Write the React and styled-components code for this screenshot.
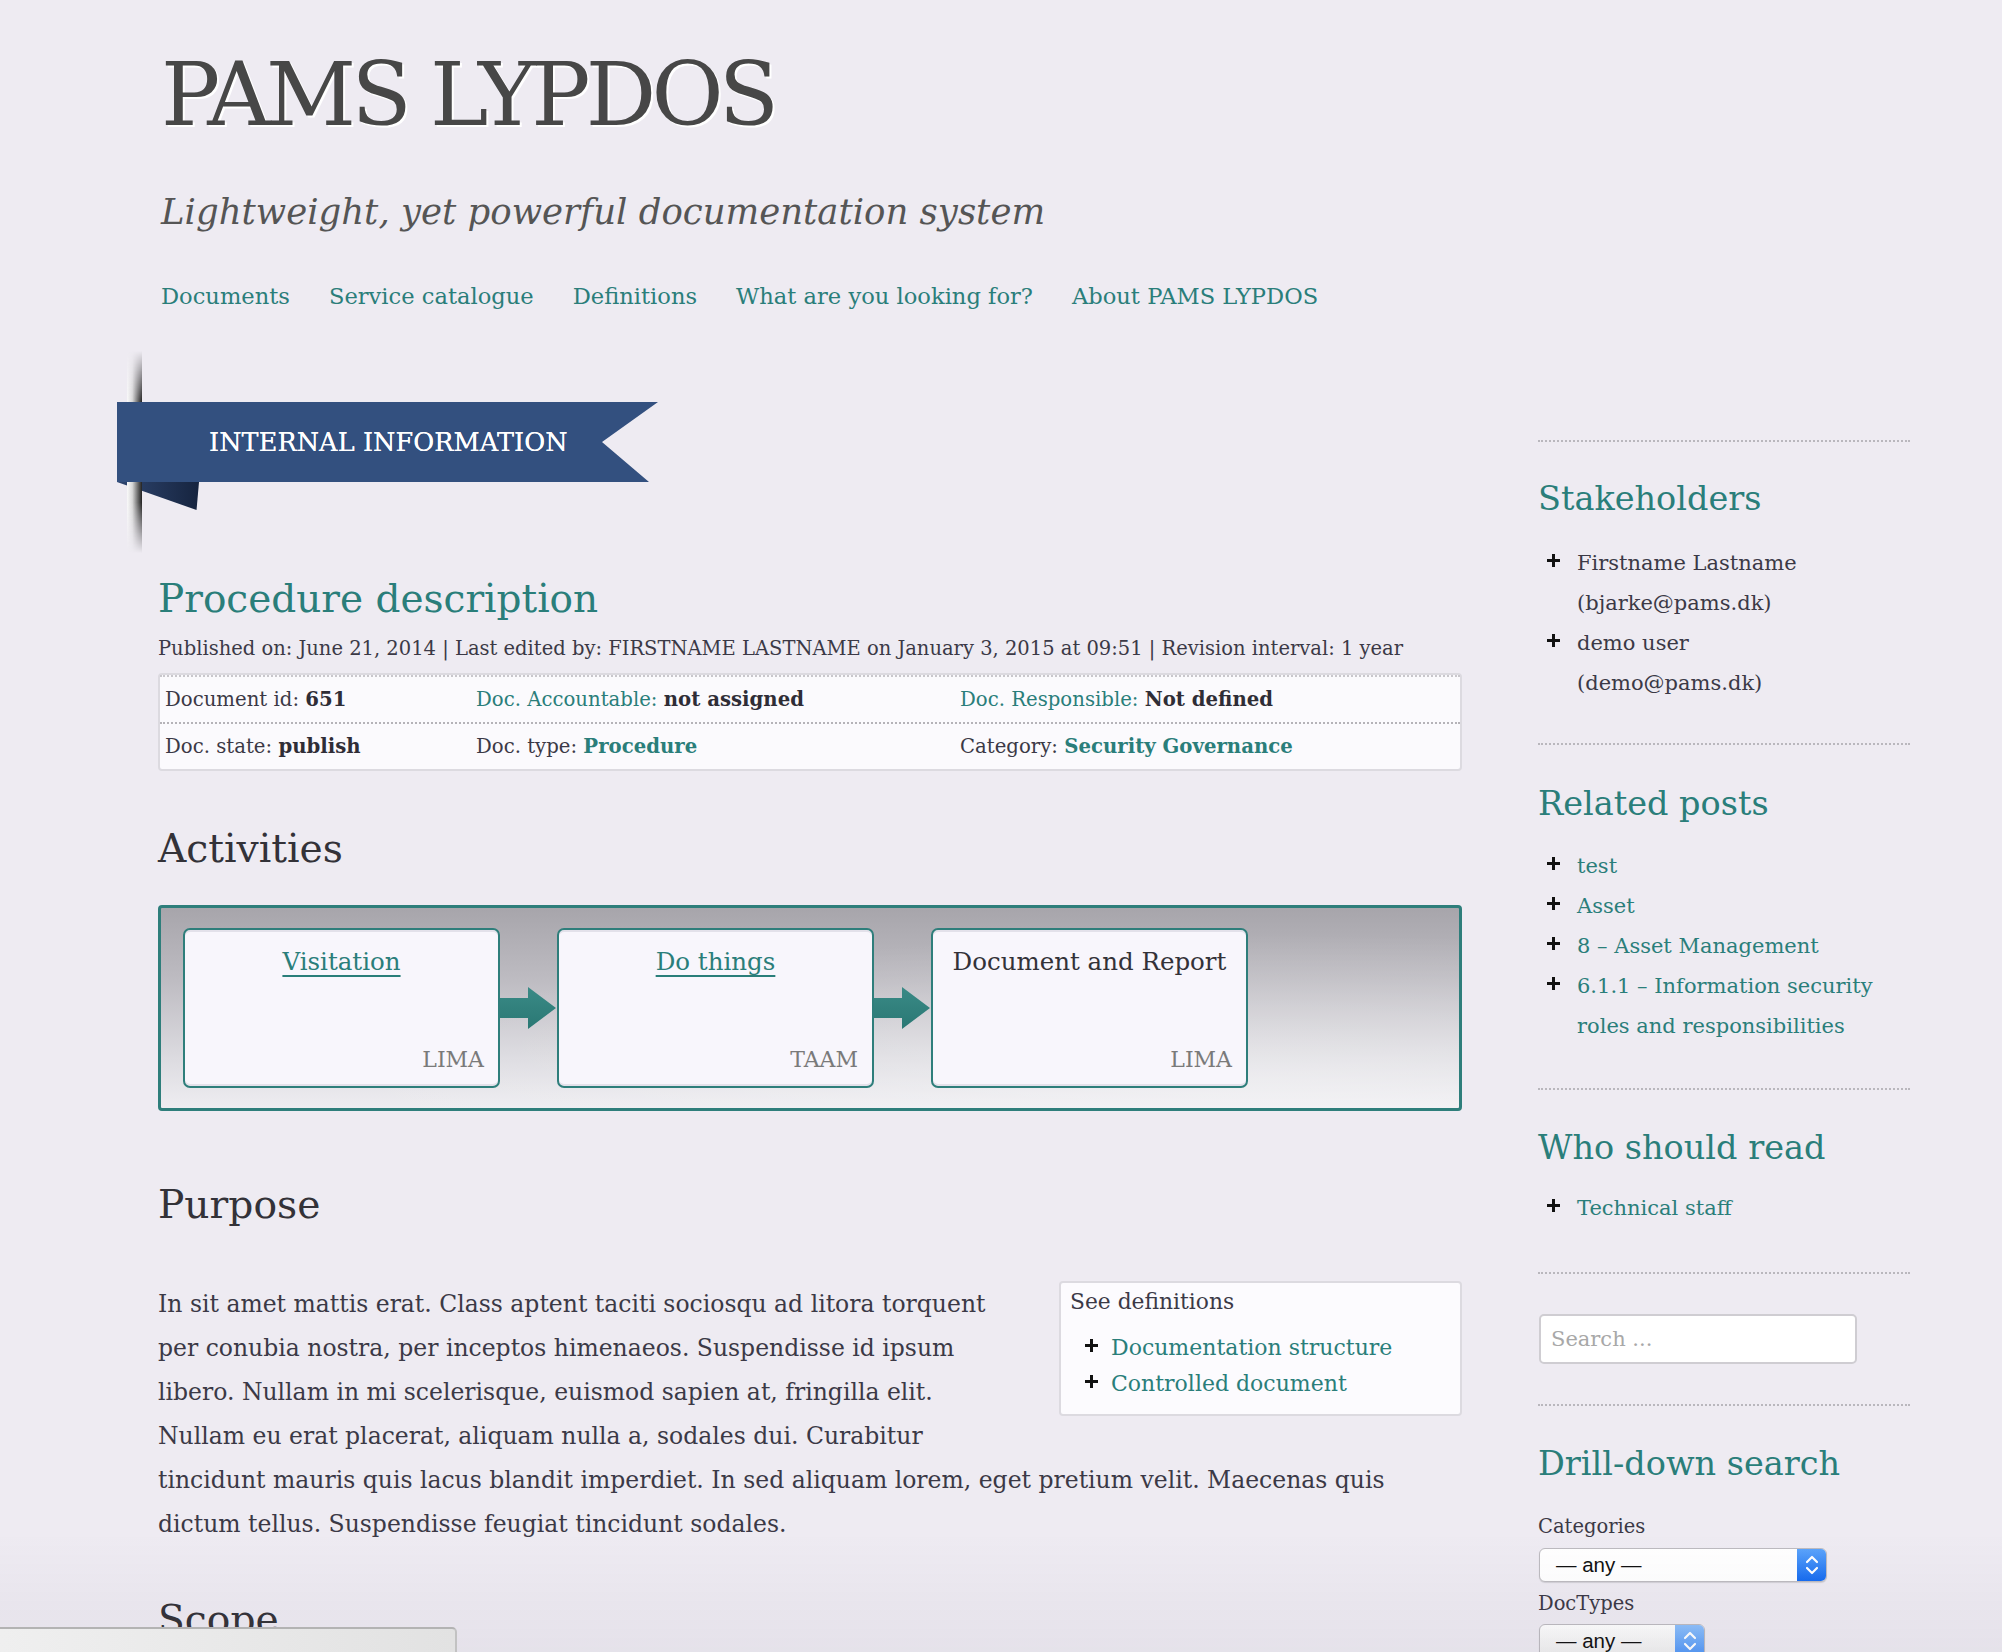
import React from "react";
import styled, { createGlobalStyle } from "styled-components";

const TEAL = "#2a7e7a";
const TEXT = "#3b3946";
const SERIF = `"DejaVu Serif", "Liberation Serif", serif`;

const GlobalStyle = createGlobalStyle`
  html, body { margin: 0; padding: 0; overflow: hidden; }
  body { background: #eeebf2; font-family: ${SERIF}; color: ${TEXT}; }
  a { color: ${TEAL}; text-decoration: none; }
  * { box-sizing: border-box; }
`;

const Page = styled.div`
  padding-left: 158px;
  min-height: 1652px;
`;

const Header = styled.header`
  padding: 45px 0 0 3px;
`;

const SiteTitle = styled.h1`
  margin: 0;
  font-family: ${SERIF};
  font-weight: normal;
  font-size: 88px;
  line-height: 100px;
  letter-spacing: -4.8px;
  color: #474747;
  text-shadow: 2px 2px 0 #fff;
`;

const Tagline = styled.p`
  margin: 42px 0 0;
  font-style: italic;
  font-size: 35.5px;
  line-height: 50px;
  color: #555;
`;

const Nav = styled.nav`
  margin-top: 39px;
  display: flex;
  gap: 39px;
  font-size: 22.6px;
  line-height: 40px;
`;

const Columns = styled.div`
  margin-top: 24px;
  display: grid;
  grid-template-columns: 1304px 372px;
  column-gap: 76px;
  align-items: start;
`;

const Main = styled.main``;

const RibbonWrap = styled.div`
  position: relative;
  margin: 62px 0 0 -41px;
  height: 80px;
`;

const Pole = styled.div`
  position: absolute;
  left: 10px;
  top: -51px;
  width: 15px;
  height: 202px;
  background: linear-gradient(to right, #fafafa 0%, #d8d8d8 35%, #555 80%, #222 100%);
  -webkit-mask-image: linear-gradient(to bottom, transparent 0%, #000 25%, #000 75%, transparent 100%);
  mask-image: linear-gradient(to bottom, transparent 0%, #000 25%, #000 75%, transparent 100%);
  z-index: 1;
`;

const Fold = styled.div`
  position: absolute;
  left: 0;
  top: 80px;
  width: 82px;
  height: 28px;
  background: linear-gradient(to right, #2f4670, #16243f);
  clip-path: polygon(0 0, 100% 0, 97% 100%);
  z-index: 0;
`;

const Ribbon = styled.div`
  position: relative;
  z-index: 2;
  width: 541px;
  height: 80px;
  background: #33507f;
  clip-path: polygon(0 0, 100% 0, calc(100% - 56px) 50%, calc(100% - 9px) 100%, 0 100%);
  display: flex;
  align-items: center;
  padding-left: 92px;
  color: #fff;
  font-size: 25.5px;
  letter-spacing: 0.1px;
  text-shadow: 0 0 0.5px #fff;
`;

const PageTitle = styled.h2`
  margin: 92px 0 0;
  font-weight: normal;
  font-size: 39px;
  line-height: 50px;
  color: ${TEAL};
`;

const Meta = styled.div`
  margin-top: 10px;
  font-size: 19.5px;
  line-height: 30px;
  color: ${TEXT};
  white-space: nowrap;
`;

const InfoTable = styled.div`
  margin-top: 9px;
  background: #fbfafd;
  border: 2px solid #dcdae0;
  border-radius: 4px;
`;

const InfoRow = styled.div`
  display: grid;
  grid-template-columns: 311px 484px 1fr;
  padding-left: 5px;
  height: 47px;
  align-items: center;
  border-top: 2px dotted ${(p) => (p.$first ? "#c9c7cc" : "#b5b3b8")};
  font-size: 19.7px;
`;

const Label = styled.span`
  color: ${(p) => (p.$teal ? TEAL : TEXT)};
`;

const Value = styled.b`
  color: ${(p) => (p.$teal ? TEAL : "#2f2d36")};
`;

const SectionTitle = styled.h3`
  margin: ${(p) => p.$mt}px 0 0;
  font-weight: normal;
  font-size: 39.2px;
  line-height: 50px;
  color: #333238;
`;

const Flow = styled.div`
  margin-top: 31px;
  height: 206px;
  border: 3px solid #2e7e7b;
  border-radius: 4px;
  background:
    radial-gradient(ellipse at 85% 85%, rgba(255,255,255,0.35), rgba(255,255,255,0) 60%),
    linear-gradient(to bottom, #a7a5ab 0%, #bdbbc1 35%, #dcdbe0 75%, #eeedf1 100%);
  display: flex;
  align-items: center;
  padding-left: 22px;
`;

const Step = styled.div`
  position: relative;
  width: 317px;
  height: 160px;
  border: 2px solid #2e7e7b;
  border-radius: 7px;
  background: #f8f6fc;
  box-shadow: inset 0 2px 0 #e3e1ea, inset 0 -2px 0 #e3e1ea;
  display: flex;
  flex-direction: column;
  align-items: center;
  padding: 12px 14px 10px;
`;

const StepTitle = styled.a`
  font-size: 24.5px;
  line-height: 40px;
  color: ${(p) => (p.$link ? TEAL : "#333238")};
  text-decoration: ${(p) => (p.$link ? "underline" : "none")};
  text-underline-offset: 5px;
  text-decoration-thickness: 2px;
`;

const StepOwner = styled.span`
  margin-top: auto;
  align-self: flex-end;
  font-size: 22px;
  line-height: 32px;
  color: #7a7a7a;
`;

const Arrow = () => (
  <svg width="57" height="44" viewBox="0 0 57 44">
    <defs>
      <linearGradient id="shaft" x1="0" y1="0" x2="0" y2="1">
        <stop offset="0" stopColor="#3a8a86" />
        <stop offset="1" stopColor="#2a7874" />
      </linearGradient>
    </defs>
    <path d="M0 12 H28 V1 L56 22 L28 43 V32 H0 Z" fill="url(#shaft)" />
  </svg>
);

const Content = styled.div`
  margin-top: 52px;
  font-size: 23.5px;
  line-height: 44px;
  color: ${TEXT};
  &::after { content: ""; display: block; clear: both; }
`;

const DefBox = styled.aside`
  float: right;
  width: 403px;
  height: 135px;
  margin: -1px 0 0 40px;
  background: #fcfbfe;
  border: 2px solid #dcdae0;
  border-radius: 4px;
  padding: 3px 10px 0 9px;
`;

const DefTitle = styled.div`
  font-size: 21.8px;
  line-height: 32px;
  margin-bottom: 12px;
`;

const BulletList = styled.ul`
  list-style: none;
  margin: 0;
  padding: 0;
  max-width: ${(p) => p.$max || "none"};
`;

const BulletItem = styled.li`
  display: grid;
  grid-template-columns: ${(p) => p.$indent}px 1fr;
  font-size: ${(p) => p.$size}px;
  line-height: ${(p) => p.$lh}px;
  color: ${(p) => (p.$teal ? TEAL : TEXT)};
`;

const PlusCell = styled.span`
  position: relative;
  height: ${(p) => p.$lh}px;
  &::before, &::after {
    content: "";
    position: absolute;
    background: #111;
  }
  &::before {
    left: ${(p) => p.$x}px;
    top: 50%;
    width: 13px;
    height: 3px;
    margin-top: -4px;
  }
  &::after {
    left: ${(p) => p.$x + 5}px;
    top: 50%;
    width: 3px;
    height: 13px;
    margin-top: -9px;
  }
`;

const Paragraph = styled.p`
  margin: 0;
`;

const Sidebar = styled.aside`
  padding-top: 100px;
`;

const Widget = styled.section`
  border-top: 2px dotted #b9b7bd;
  padding: ${(p) => p.$pt ?? 36}px 0 ${(p) => p.$pb ?? 40}px;
`;

const WidgetTitle = styled.h4`
  margin: 0 0 ${(p) => p.$mb ?? 20}px;
  font-weight: normal;
  font-size: 33.5px;
  line-height: 44px;
  color: ${TEAL};
`;

const SearchInput = styled.input`
  display: block;
  width: 318px;
  height: 50px;
  margin-left: 1px;
  border: 2px solid #cfcdd2;
  border-radius: 5px;
  background: #fff;
  padding: 0 10px;
  font-family: ${SERIF};
  font-size: 21px;
  color: ${TEXT};
  &::placeholder { color: #a8a8a8; }
`;

const FieldLabel = styled.div`
  margin-top: ${(p) => p.$mt || 0}px;
  font-size: 19.5px;
  line-height: 30px;
  color: ${TEXT};
`;

const Select = styled.div`
  display: flex;
  width: ${(p) => p.$w}px;
  height: 34px;
  margin: ${(p) => p.$mt}px 0 0 1px;
  border: 1px solid #bdbbc0;
  border-radius: 6px;
  overflow: hidden;
  background: ${(p) => (p.$dim ? "linear-gradient(#fdfdfd, #eeeeee)" : "#fff")};
  box-shadow: 0 1px 1px rgba(0,0,0,0.12);
`;

const SelectText = styled.span`
  flex: 1;
  font-family: "Liberation Sans", Arial, sans-serif;
  font-size: 20.5px;
  line-height: 32px;
  padding-left: 16px;
  color: #111;
`;

const Stepper = styled.span`
  width: 29px;
  display: flex;
  align-items: center;
  justify-content: center;
  background: ${(p) => (p.$dim ? "linear-gradient(#8ec0fb, #4d94f6)" : "linear-gradient(#5ba4fb, #166cf0)")};
`;

const Chevrons = () => (
  <svg width="14" height="24" viewBox="0 0 14 24">
    <path d="M2 9 L7 4 L12 9 M2 15 L7 20 L12 15" fill="none" stroke="#fff" strokeWidth="2.2" strokeLinecap="round" strokeLinejoin="round" />
  </svg>
);

const BottomShade = styled.div`
  position: fixed;
  left: 0;
  right: 0;
  bottom: 0;
  height: 120px;
  background: linear-gradient(to bottom, rgba(80,70,100,0) 0%, rgba(80,70,100,0.05) 100%);
  pointer-events: none;
`;

const StatusBubble = styled.div`
  position: fixed;
  left: 0;
  bottom: 0;
  width: 457px;
  height: 25px;
  border-top: 2px solid #b3b3b3;
  border-right: 2px solid #c2c2c2;
  border-top-right-radius: 5px;
  background: linear-gradient(to right, #efefef, #e2e2e2);
  z-index: 10;
`;

function Bullets({ items, teal, indent = 39, x = 9, size = 21, lh = 40, max }) {
  return (
    <BulletList $max={max}>
      {items.map((t) => (
        <BulletItem key={t} $teal={teal} $indent={indent} $size={size} $lh={lh}>
          <PlusCell $lh={lh} $x={x} />
          <span>{teal ? <a href="#">{t}</a> : t}</span>
        </BulletItem>
      ))}
    </BulletList>
  );
}

export default function App() {
  return (
    <>
      <GlobalStyle />
      <Page>
        <Header>
          <SiteTitle>PAMS LYPDOS</SiteTitle>
          <Tagline>Lightweight, yet powerful documentation system</Tagline>
          <Nav>
            <a href="#">Documents</a>
            <a href="#">Service catalogue</a>
            <a href="#">Definitions</a>
            <a href="#">What are you looking for?</a>
            <a href="#">About PAMS LYPDOS</a>
          </Nav>
        </Header>

        <Columns>
          <Main>
            <RibbonWrap>
              <Pole />
              <Fold />
              <Ribbon>INTERNAL INFORMATION</Ribbon>
            </RibbonWrap>

            <PageTitle>Procedure description</PageTitle>
            <Meta>
              Published on: June 21, 2014 | Last edited by: FIRSTNAME LASTNAME on January 3, 2015 at 09:51 | Revision interval: 1 year
            </Meta>

            <InfoTable>
              <InfoRow $first>
                <span><Label>Document id: </Label><Value>651</Value></span>
                <span><Label $teal>Doc. Accountable: </Label><Value>not assigned</Value></span>
                <span><Label $teal>Doc. Responsible: </Label><Value>Not defined</Value></span>
              </InfoRow>
              <InfoRow>
                <span><Label>Doc. state: </Label><Value>publish</Value></span>
                <span><Label>Doc. type: </Label><Value $teal>Procedure</Value></span>
                <span><Label>Category: </Label><Value $teal>Security Governance</Value></span>
              </InfoRow>
            </InfoTable>

            <SectionTitle $mt={53}>Activities</SectionTitle>
            <Flow>
              <Step>
                <StepTitle href="#" $link>Visitation</StepTitle>
                <StepOwner>LIMA</StepOwner>
              </Step>
              <Arrow />
              <Step>
                <StepTitle href="#" $link>Do things</StepTitle>
                <StepOwner>TAAM</StepOwner>
              </Step>
              <Arrow />
              <Step>
                <StepTitle as="span">Document and Report</StepTitle>
                <StepOwner>LIMA</StepOwner>
              </Step>
            </Flow>

            <SectionTitle $mt={69}>Purpose</SectionTitle>
            <Content>
              <DefBox>
                <DefTitle>See definitions</DefTitle>
                <Bullets items={["Documentation structure", "Controlled document"]} teal indent={41} x={15} size={22} lh={36} />
              </DefBox>
              <Paragraph>
                In sit amet mattis erat. Class aptent taciti sociosqu ad litora torquent per conubia nostra, per inceptos himenaeos. Suspendisse id ipsum libero. Nullam in mi scelerisque, euismod sapien at, fringilla elit. Nullam eu erat placerat, aliquam nulla a, sodales dui. Curabitur tincidunt mauris quis lacus blandit imperdiet. In sed aliquam lorem, eget pretium velit. Maecenas quis dictum tellus. Suspendisse feugiat tincidunt sodales.
              </Paragraph>
            </Content>

            <SectionTitle $mt={49}>Scope</SectionTitle>
            <Content>
              <Paragraph>
                Curabitur tincidunt mauris quis lacus blandit imperdiet. In sed aliquam lorem, eget pretium velit.
              </Paragraph>
            </Content>
          </Main>

          <Sidebar>
            <Widget $pt={35} $pb={40}>
              <WidgetTitle $mb={22}>Stakeholders</WidgetTitle>
              <Bullets max="339px" items={["Firstname Lastname (bjarke@pams.dk)", "demo user (demo@pams.dk)"]} />
            </Widget>
            <Widget $pt={37} $pb={42}>
              <WidgetTitle>Related posts</WidgetTitle>
              <Bullets max="339px" teal items={["test", "Asset", "8 – Asset Management", "6.1.1 – Information security roles and responsibilities"]} />
            </Widget>
            <Widget $pt={36} $pb={44}>
              <WidgetTitle $mb={18}>Who should read</WidgetTitle>
              <Bullets max="339px" teal items={["Technical staff"]} />
            </Widget>
            <Widget $pt={40} $pb={40}>
              <SearchInput placeholder="Search ..." />
            </Widget>
            <Widget $pt={36}>
              <WidgetTitle $mb={26}>Drill-down search</WidgetTitle>
              <FieldLabel>Categories</FieldLabel>
              <Select $w={288} $mt={6}>
                <SelectText>— any —</SelectText>
                <Stepper><Chevrons /></Stepper>
              </Select>
              <FieldLabel $mt={7}>DocTypes</FieldLabel>
              <Select $w={166} $mt={5} $dim>
                <SelectText>— any —</SelectText>
                <Stepper $dim><Chevrons /></Stepper>
              </Select>
            </Widget>
          </Sidebar>
        </Columns>
      </Page>
      <BottomShade />
      <StatusBubble />
    </>
  );
}
